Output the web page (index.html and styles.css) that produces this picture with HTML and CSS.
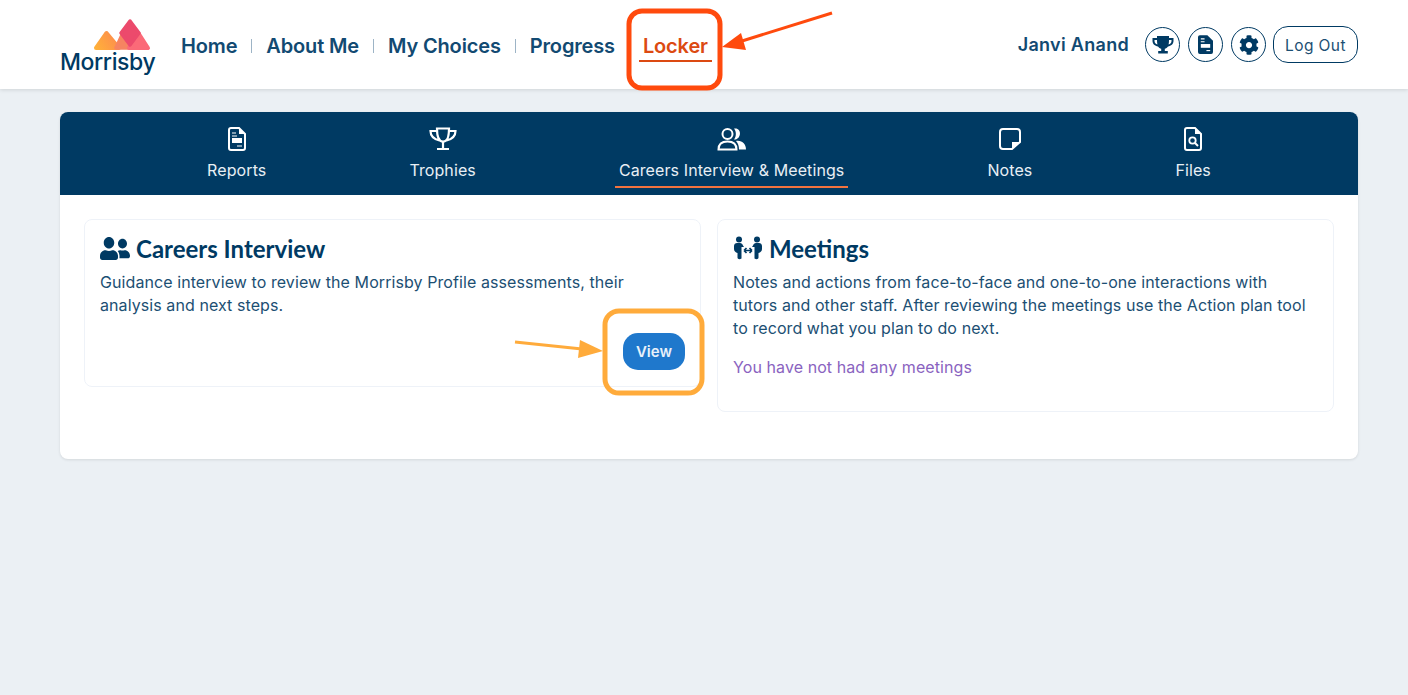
FILE: index.html
```html
<!DOCTYPE html>
<html lang="en">
<head>
    <meta charset="UTF-8">
    <title>Morrisby - Locker</title>
    <link rel="stylesheet" href="styles.css">
</head>
<body>

    <header class="top-bar">
        <a class="logo" href="#">
            <svg class="logo-mark" width="58" height="33" viewBox="0 0 58 33">
                <defs>
                    <linearGradient id="logoLeft" x1="0" y1="1" x2="1" y2="0.6">
                        <stop offset="0" stop-color="#ffb03a"/>
                        <stop offset="1" stop-color="#fd8f4c"/>
                    </linearGradient>
                </defs>
                <path d="M3 30 L13.5 15 L26 30 Z" fill="url(#logoLeft)" stroke="url(#logoLeft)" stroke-width="4" stroke-linejoin="round"/>
                <path d="M23 30 L29 17 L40 30 Z" fill="#f68461" stroke="#f68461" stroke-width="3.5" stroke-linejoin="round"/>
                <path d="M36 30 L46 16 L55 30 Z" fill="#fb6a78" stroke="#fb6a78" stroke-width="4" stroke-linejoin="round"/>
                <path d="M37 3 L46 15 L37 27 L28 15 Z" fill="#ec4a6c" stroke="#ec4a6c" stroke-width="3.5" stroke-linejoin="round"/>
            </svg>
            <span class="logo-text">Morrisby</span>
        </a>

        <nav class="main-nav">
            <a href="#">Home</a>
            <span class="nav-sep"></span>
            <a href="#">About Me</a>
            <span class="nav-sep"></span>
            <a href="#">My Choices</a>
            <span class="nav-sep"></span>
            <a href="#">Progress</a>
            <a href="#" class="nav-active">Locker</a>
        </nav>

        <div class="user-area">
            <span class="user-name">Janvi Anand</span>
            <a class="round-btn" href="#">
                <svg width="22" height="20" viewBox="0 0 22 20"><path d="M5 1h12v2h4.500v3c0 3-2.500 5-5.500 5.500-.8 1.200-2 2-3.200 2.300V16h3v2.500H6.200V16h3v-2.200C8 13.500 6.800 12.700 6 11.500 3 11 .5 9 .5 6V3H5V1zM2.500 5v1c0 1.700 1.200 2.900 2.900 3.400C5.100 8 5 6.500 5 5H2.500zM17 5c0 1.500-.1 3-.4 4.400 1.700-.5 2.900-1.700 2.900-3.400V5H17z" fill="#003a63"/></svg>
            </a>
            <a class="round-btn" href="#">
                <svg width="15" height="19" viewBox="0 0 16 20"><path d="M2 0h8l6 6v12a2 2 0 0 1-2 2H2a2 2 0 0 1-2-2V2a2 2 0 0 1 2-2z" fill="#003a63"/><path d="M3 4h4M3 7h4" stroke="#fff" stroke-width="1.200"/><rect x="3" y="9.500" width="10" height="4" fill="#fff"/><path d="M9 16.500h4" stroke="#fff" stroke-width="1.200"/></svg>
            </a>
            <a class="round-btn" href="#">
                <svg width="20" height="20" viewBox="0 0 512 512"><path d="M487.400 315.700l-42.600-24.600c4.300-23.200 4.300-47 0-70.200l42.600-24.600c4.900-2.800 7.100-8.600 5.500-14-11.100-35.600-30-67.800-54.700-94.600-3.800-4.100-10-5.100-14.800-2.300L380.800 110c-17.900-15.400-38.500-27.300-60.800-35.100V25.800c0-5.600-3.900-10.500-9.400-11.700-36.700-8.200-74.300-7.800-109.200 0-5.500 1.200-9.400 6.100-9.400 11.700V75c-22.200 7.900-42.800 19.800-60.800 35.100L88.700 85.500c-4.900-2.800-11-1.900-14.800 2.300-24.700 26.700-43.600 58.900-54.700 94.600-1.700 5.400.6 11.200 5.500 14L67.300 221c-4.300 23.200-4.300 47 0 70.200l-42.600 24.600c-4.900 2.800-7.100 8.600-5.500 14 11.100 35.600 30 67.800 54.700 94.600 3.800 4.100 10 5.100 14.800 2.300l42.600-24.600c17.900 15.400 38.500 27.300 60.800 35.100v49.200c0 5.600 3.900 10.500 9.400 11.700 36.700 8.200 74.300 7.800 109.200 0 5.500-1.200 9.400-6.100 9.400-11.700v-49.200c22.200-7.900 42.800-19.800 60.800-35.100l42.600 24.600c4.900 2.800 11 1.900 14.800-2.300 24.700-26.700 43.600-58.900 54.700-94.600 1.500-5.500-.7-11.300-5.600-14.100zM256 336c-44.100 0-80-35.900-80-80s35.900-80 80-80 80 35.900 80 80-35.900 80-80 80z" fill="#003a63"/></svg>
            </a>
            <a class="logout-btn" href="#">Log Out</a>
        </div>
    </header>

    <main class="locker-card">
        <div class="tab-bar">
            <a class="tab" href="#">
                <svg width="18" height="24" viewBox="0 0 18 24"><path d="M3 1h8l6 6v14a2 2 0 0 1-2 2H3a2 2 0 0 1-2-2V3a2 2 0 0 1 2-2z" fill="none" stroke="#fff" stroke-width="2"/><path d="M11 1v6h6z" fill="#fff"/><path d="M4 6h4M4 9h5" stroke="#fff" stroke-width="1.200"/><rect x="4" y="11" width="10" height="5" fill="#fff"/><path d="M9 19h5" stroke="#fff" stroke-width="1.200"/></svg>
                <span>Reports</span>
            </a>
            <a class="tab" href="#">
                <svg width="28" height="24" viewBox="0 0 28 24"><path d="M8 1.500h12c0 6-.5 13-6 13s-6-7-6-13zM8 4H1.500c0 5 3 8 9 9.500M20 4h6.500c0 5-3 8-9 9.500M14 14.500V21M8 22h12" fill="none" stroke="#fff" stroke-width="2.200"/></svg>
                <span>Trophies</span>
            </a>
            <a class="tab tab-active" href="#">
                <svg width="30" height="24" viewBox="0 0 30 24"><circle cx="10.500" cy="7" r="5" fill="none" stroke="#fff" stroke-width="2"/><path d="M1.500 22.500c0-5 3-8 9-8s9 3 9 8z" fill="none" stroke="#fff" stroke-width="2"/><path d="M17 1.500c8-1.500 8 11 0 11 2.500-3 2.500-8 0-11zM19 14c6-1 10 3 10 8.500h-7c0-3.500-1-6.500-3-8.500z" fill="#fff"/></svg>
                <span>Careers Interview &amp; Meetings</span>
            </a>
            <a class="tab" href="#">
                <svg width="22" height="24" viewBox="0 0 22 24"><path d="M13 22H4a3 3 0 0 1-3-3V5a3 3 0 0 1 3-3h14a3 3 0 0 1 3 3v10z" fill="none" stroke="#fff" stroke-width="2"/><path d="M13 22v-7h8z" fill="#fff"/></svg>
                <span>Notes</span>
            </a>
            <a class="tab" href="#">
                <svg width="18" height="24" viewBox="0 0 18 24"><path d="M3 1h8l6 6v14a2 2 0 0 1-2 2H3a2 2 0 0 1-2-2V3a2 2 0 0 1 2-2z" fill="none" stroke="#fff" stroke-width="2"/><path d="M11 1v6h6z" fill="#fff"/><circle cx="8.500" cy="13.500" r="3.200" fill="none" stroke="#fff" stroke-width="1.800"/><path d="M11 16l3 3" stroke="#fff" stroke-width="2"/></svg>
                <span>Files</span>
            </a>
        </div>

        <div class="panels">
            <section class="panel panel-interview">
                <h2>
                    <svg width="30" height="23" viewBox="0 32 640 448" preserveAspectRatio="none"><path d="M192 256c61.900 0 112-50.100 112-112S253.900 32 192 32 80 82.100 80 144s50.100 112 112 112zm76.800 32h-8.300c-20.800 10-43.900 16-68.500 16s-47.600-6-68.500-16h-8.300C51.600 288 0 339.600 0 403.200V432c0 26.500 21.500 48 48 48h288c26.500 0 48-21.500 48-48v-28.800c0-63.600-51.600-115.200-115.200-115.200zM480 256c53 0 96-43 96-96s-43-96-96-96-96 43-96 96 43 96 96 96zm48 32h-3.800c-13.900 4.800-28.600 8-44.200 8s-30.300-3.200-44.200-8H432c-20.400 0-39.200 5.900-55.700 15.400 24.400 26.300 39.700 61.200 39.700 99.800v38.400c0 2.200-.5 4.300-.6 6.400H592c26.500 0 48-21.500 48-48 0-61.900-50.100-112-112-112z" fill="#003a63"/></svg>
                    Careers Interview
                </h2>
                <p>Guidance interview to review the Morrisby Profile assessments, their analysis and next steps.</p>
                <a class="view-btn" href="#">View</a>
            </section>

            <section class="panel">
                <h2>
                    <svg width="30" height="24" viewBox="0 0 30 24"><circle cx="6" cy="3.500" r="3" fill="#003a63"/><circle cx="24" cy="3.500" r="3" fill="#003a63"/><path d="M1 10c0-2 1.500-3 3-3h3c1.500 0 2.500 1 3 2.500L11 11H8.500v11.500c-2 1.500-4 .5-4-1V17C2.500 16.500 1 15 1 13z" fill="#003a63"/><path d="M29 10c0-2-1.500-3-3-3h-3c-1.500 0-2.500 1-3 2.500L19 11h2.500v11.500c2 1.500 4 .5 4-1V17c2-.5 3.500-2 3.500-4z" fill="#003a63"/><path d="M11 14.500h8M11 14.500l2.500-2.500M11 14.500l2.500 2.500M19 14.500L16.500 12M19 14.500L16.500 17" stroke="#003a63" stroke-width="1.700" fill="none"/></svg>
                    Meetings
                </h2>
                <p>Notes and actions from face-to-face and one-to-one interactions with tutors and other staff. After reviewing the meetings use the Action plan tool to record what you plan to do next.</p>
                <p class="empty-note">You have not had any meetings</p>
            </section>
        </div>
    </main>

    <!-- annotations drawn on top of the screenshot -->
    <svg class="annotations" width="1408" height="695" viewBox="0 0 1408 695">
        <rect x="629" y="11" width="91" height="77" rx="13" fill="none" stroke="#ff4a0d" stroke-width="5"/>
        <path d="M832 13 L742 41" stroke="#ff4a0d" stroke-width="3" fill="none"/>
        <path d="M722 47 L741 33 L746 50 Z" fill="#ff4a0d"/>
        <rect x="605" y="311" width="97" height="82" rx="14" fill="none" stroke="#ffab3b" stroke-width="5"/>
        <path d="M515 342 L582 349" stroke="#ffab3b" stroke-width="3" fill="none"/>
        <path d="M603 351 L580 340 L578 358 Z" fill="#ffab3b"/>
    </svg>

</body>
</html>
```

FILE: styles.css
```css
body {
    margin: 0;
    padding: 0;
    height: 695px;
    overflow: hidden;
    position: relative;
    font-family: Inter, "Open Sans", sans-serif;
    background-color: #ebf0f4;
    color: #003a63;
}

a {
    text-decoration: none;
    color: inherit;
}

.top-bar {
    display: flex;
    align-items: center;
    height: 89px;
    padding: 0 50px 0 60px;
    background-color: #fff;
    box-shadow: 0 1px 4px rgba(0, 0, 0, 0.12);
}

.logo {
    display: flex;
    flex-direction: column;
    align-items: flex-end;
    width: 96px;
    margin-right: 25px;
    padding-top: 2px;
}

.logo-mark {
    display: block;
    margin-right: 5px;
}

.logo-text {
    font-size: 23px;
    line-height: 22px;
    font-weight: 500;
    letter-spacing: -0.4px;
    width: 96px;
}

.main-nav {
    display: flex;
    align-items: center;
    padding-top: 2px;
    font-size: 20px;
    font-weight: 600;
    letter-spacing: -0.15px;
    color: #124a72;
}

.nav-sep {
    width: 1px;
    height: 14px;
    margin: 0 14px;
    background-color: #9db4c6;
}

.nav-active {
    position: relative;
    margin-left: 28px;
    color: #dc4a12;
}

.nav-active::after {
    content: "";
    position: absolute;
    left: -4px;
    right: -4px;
    bottom: -4px;
    height: 2px;
    background-color: #dc4a12;
}

.user-area {
    display: flex;
    align-items: center;
    margin-left: auto;
}

.user-name {
    font-size: 18px;
    font-weight: 600;
    letter-spacing: 0.3px;
    color: #124a72;
    margin-right: 16px;
}

.round-btn {
    display: flex;
    align-items: center;
    justify-content: center;
    box-sizing: border-box;
    width: 35px;
    height: 35px;
    margin-right: 8px;
    border: 1px solid #003a63;
    border-radius: 50%;
}

.round-btn:nth-of-type(3) {
    margin-right: 7px;
}

.logout-btn {
    box-sizing: border-box;
    width: 85px;
    height: 37px;
    line-height: 37px;
    text-align: center;
    font-size: 15.5px;
    letter-spacing: 0.4px;
    color: #1c4f73;
    border: 1px solid #003a63;
    border-radius: 15px;
}

.locker-card {
    margin: 23px 50px 0 60px;
    background-color: #fff;
    border-radius: 8px;
    box-shadow: 0 1px 3px rgba(0, 0, 0, 0.1);
    overflow: hidden;
}

.tab-bar {
    display: flex;
    justify-content: center;
    gap: 135px;
    height: 83px;
    background-color: #003a63;
}

.tab {
    display: flex;
    flex-direction: column;
    align-items: center;
    box-sizing: border-box;
    height: 76px;
    padding: 15px 4px 0;
    font-size: 16px;
    line-height: 18px;
    letter-spacing: 0.1px;
    color: #e8eff5;
}

.tab svg {
    display: block;
    margin-bottom: 10px;
}

.tab-active {
    border-bottom: 2px solid #f2733f;
}

.panels {
    display: grid;
    grid-template-columns: 1fr 1fr;
    gap: 16px;
    align-items: start;
    padding: 24px 24px 47px;
}

.panel {
    box-sizing: border-box;
    padding: 15px 15px 16px;
    border: 1px solid #eef2f8;
    border-radius: 8px;
    display: flex;
    flex-direction: column;
}

.panel h2 {
    display: flex;
    align-items: center;
    gap: 6px;
    margin: 0 0 10px;
    height: 26px;
    font-family: Lato, sans-serif;
    font-size: 24px;
    font-weight: 700;
    color: #003a63;
}

.panel p {
    margin: 0;
    padding-right: 6px;
    font-size: 16px;
    line-height: 23px;
    letter-spacing: 0.08px;
    color: #1c4f73;
}

.panel .empty-note {
    margin: 16px 0;
    color: #8a63c0;
}

.view-btn {
    align-self: flex-end;
    margin-top: 16px;
    padding: 0 13px;
    height: 37px;
    line-height: 37px;
    font-size: 15px;
    font-weight: 600;
    color: #e8f1fa;
    background-color: #1f78cc;
    border-radius: 15px;
}

.annotations {
    position: absolute;
    top: 0;
    left: 0;
    pointer-events: none;
}
```
